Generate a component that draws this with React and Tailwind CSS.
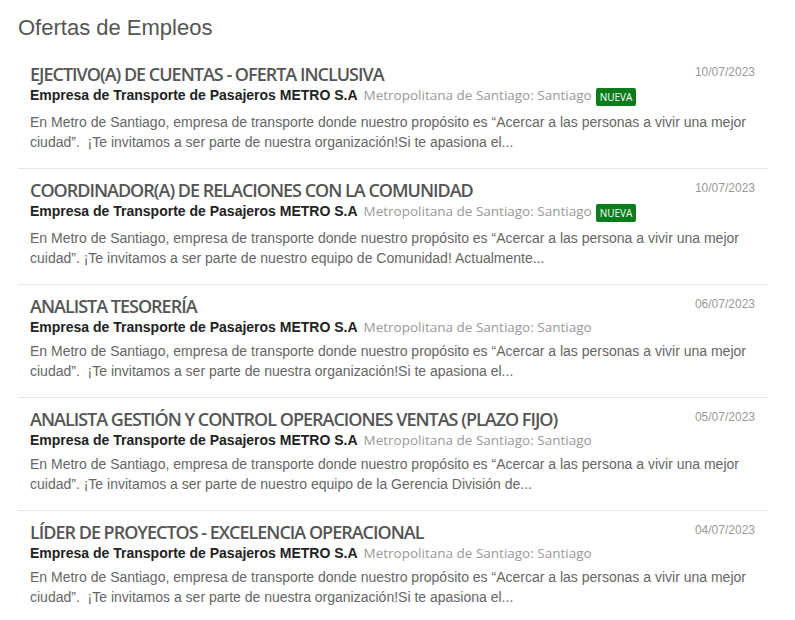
import React from 'react';

const jobs = [
  {
    title: 'EJECTIVO(A) DE CUENTAS - OFERTA INCLUSIVA',
    date: '10/07/2023',
    nueva: true,
    lines: [
      'En Metro de Santiago, empresa de transporte donde nuestro propósito es “Acercar a las personas a vivir una mejor',
      'ciudad”.  ¡Te invitamos a ser parte de nuestra organización!Si te apasiona el...',
    ],
  },
  {
    title: 'COORDINADOR(A) DE RELACIONES CON LA COMUNIDAD',
    date: '10/07/2023',
    nueva: true,
    lines: [
      'En Metro de Santiago, empresa de transporte donde nuestro propósito es “Acercar a las persona a vivir una mejor',
      'cuidad”. ¡Te invitamos a ser parte de nuestro equipo de Comunidad! Actualmente...',
    ],
  },
  {
    title: 'ANALISTA TESORERÍA',
    date: '06/07/2023',
    nueva: false,
    lines: [
      'En Metro de Santiago, empresa de transporte donde nuestro propósito es “Acercar a las personas a vivir una mejor',
      'ciudad”.  ¡Te invitamos a ser parte de nuestra organización!Si te apasiona el...',
    ],
  },
  {
    title: 'ANALISTA GESTIÓN Y CONTROL OPERACIONES VENTAS (PLAZO FIJO)',
    date: '05/07/2023',
    nueva: false,
    lines: [
      'En Metro de Santiago, empresa de transporte donde nuestro propósito es “Acercar a las persona a vivir una mejor',
      'cuidad”. ¡Te invitamos a ser parte de nuestro equipo de la Gerencia División de...',
    ],
  },
  {
    title: 'LÍDER DE PROYECTOS - EXCELENCIA OPERACIONAL',
    date: '04/07/2023',
    nueva: false,
    lines: [
      'En Metro de Santiago, empresa de transporte donde nuestro propósito es “Acercar a las personas a vivir una mejor',
      'ciudad”.  ¡Te invitamos a ser parte de nuestra organización!Si te apasiona el...',
    ],
  },
];

const JobItem = ({ job, last }) => (
  <div className={`pl-3 pr-[13px] pt-[10px] pb-[16px] ${last ? '' : 'border-b border-[#e6e6e6]'}`}>
    <div className="flex justify-between items-start">
      <h2 className="font-['Open_Sans',sans-serif] font-semibold text-[18px] leading-[22px] tracking-[-1px] text-[#555]">
        {job.title}
      </h2>
      <span className="font-['Liberation_Sans',Arial,sans-serif] text-[12px] leading-[16px] text-[#999] pt-[1px]">
        {job.date}
      </span>
    </div>
    <div className="flex items-start leading-[20px]">
      <span className="font-['Liberation_Sans',Arial,sans-serif] font-bold text-[14px] text-[#222]">
        Empresa de Transporte de Pasajeros METRO S.A
      </span>
      <span className="ml-[6px] font-['Open_Sans',sans-serif] text-[13.5px] text-[#999]">
        Metropolitana de Santiago: Santiago
      </span>
      {job.nueva && (
        <span className="ml-[4px] mt-[3px] mb-[2px] bg-[#0a7d1a] text-white font-['Open_Sans',sans-serif] text-[10px] leading-[18px] px-[4px] rounded-[2px]">
          NUEVA
        </span>
      )}
    </div>
    <p className="mt-[4px] font-['Liberation_Sans',Arial,sans-serif] text-[14px] leading-[20px] text-[#666] whitespace-pre">
      {job.lines[0]}
      <br />
      {job.lines[1]}
    </p>
  </div>
);

const App = () => {
  return (
    <div className="bg-white min-h-[620px] px-[18px] pt-[14px]">
      <h1 className="font-['Liberation_Sans',Arial,sans-serif] text-[22px] leading-[28px] text-[#555] mb-[11px]">
        Ofertas de Empleos
      </h1>
      <div className="w-[750px]">
        {jobs.map((job, i) => (
          <JobItem key={i} job={job} last={i === jobs.length - 1} />
        ))}
      </div>
    </div>
  );
};

export default App;
